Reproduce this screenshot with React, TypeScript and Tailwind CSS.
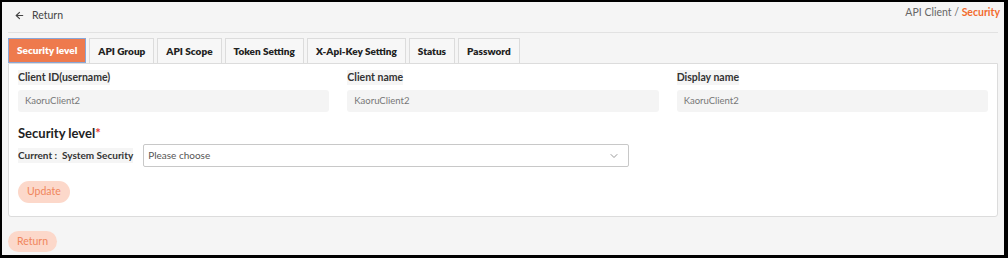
import { ArrowLeft, ChevronDown } from "lucide-react";

const tabs = [
  "Security level",
  "API Group",
  "API Scope",
  "Token Setting",
  "X-Api-Key Setting",
  "Status",
  "Password",
];

const fields = [
  { label: "Client ID(username)", value: "KaoruClient2" },
  { label: "Client name", value: "KaoruClient2" },
  { label: "Display name", value: "KaoruClient2" },
];

export default function App() {
  return (
    <div
      className="h-[258px] w-[1008px] overflow-hidden border-t-2 border-l-2 border-r-4 border-b-[3px] border-black bg-[#f5f5f5] text-[#333]"
      style={{ fontFamily: 'Lato, "Open Sans", sans-serif' }}
    >
      <div className="px-[6px]">
        {/* header */}
        <div className="flex h-[31px] items-start justify-between border-b border-[#e2e2e2]">
          <button className="mt-[6px] flex items-center gap-[7px] pl-[6px] text-[10.5px] leading-[14px] text-[#444]">
            <ArrowLeft className="h-[11px] w-[11px]" strokeWidth={2.5} />
            Return
          </button>
          <div className="mt-[3px] mr-[-2px] text-[10.5px] leading-[14px] text-[#666]">
            API Client / <span className="font-bold text-[#f26b2d]">Security</span>
          </div>
        </div>

        {/* tabs */}
        <div className="mt-[5px] flex gap-[3px]">
          {tabs.map((t, i) => (
            <div
              key={t}
              className={
                i === 0
                  ? "flex h-[25px] items-center border border-[#8aa6d6] bg-[#ee7a4d] px-[8px] text-[10px] font-extrabold text-white"
                  : "flex h-[25px] items-center border border-b-0 border-[#dcdcdc] bg-[#f7f7f7] px-[8px] text-[10px] font-extrabold text-[#222]"
              }
            >
              {t}
            </div>
          ))}
        </div>

        {/* panel */}
        <div className="h-[154px] rounded-b-[3px] border border-[#dcdcdc] bg-white px-[9px] pt-[6px]">
          <div className="grid grid-cols-3 gap-[18px]">
            {fields.map((f) => (
              <div key={f.label} className="flex flex-col items-start">
                <span className="bg-[#f5f5f5] text-[10.5px] leading-[15px] font-bold text-[#333]">{f.label}</span>
                <div className="mt-[5px] flex h-[22px] w-full items-center rounded-[3px] bg-[#f4f4f4] px-[7px] text-[9.5px] text-[#777]">
                  {f.value}
                </div>
              </div>
            ))}
          </div>

          <div className="mt-[12px] text-[13px] leading-[18px] font-bold text-[#222]">
            Security level<span className="text-[#e53935]">*</span>
          </div>

          <div className="mt-[2px] flex items-center gap-[10px]">
            <span className="bg-[#f5f5f5] text-[10px] leading-[15px] font-bold text-[#333]">Current : &nbsp;System Security</span>
            <div className="flex h-[23px] w-[486px] items-center justify-between rounded-[2px] border border-[#c8c8c8] px-[4px] text-[10px] text-[#555]">
              Please choose
              <ChevronDown className="mr-[4px] h-[12px] w-[12px] text-[#777]" strokeWidth={1.5} />
            </div>
          </div>

          <button className="mt-[14px] block h-[22px] rounded-full bg-[#fcd8ca] px-[9px] text-[10.5px] text-[#f0865c]">
            Update
          </button>
        </div>

        <button className="mt-[14px] block h-[21px] rounded-full bg-[#fcd8ca] px-[9px] text-[10.5px] text-[#f0865c]">
          Return
        </button>
      </div>
    </div>
  );
}
